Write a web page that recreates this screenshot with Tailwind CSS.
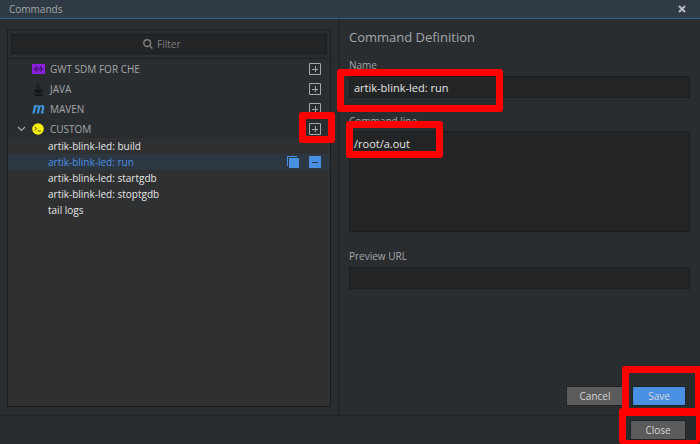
<!DOCTYPE html>
<html lang="en">
<head>
<meta charset="utf-8">
<meta name="viewport" content="width=device-width, initial-scale=1">
<title>Commands</title>
<script src="https://cdn.jsdelivr.net/npm/@tailwindcss/browser@4"></script>
</head>
<body class="flex min-h-screen flex-col overflow-hidden bg-[#292d30] font-['Open_Sans','Noto_Sans',sans-serif] text-[10px] leading-4 text-[#a5a7a8]">
<svg class="hidden" aria-hidden="true">
  <symbol id="plus" viewBox="0 0 12 12"><path d="M.5.5h11v11H.5zM3 6.500h6M6.500 3v6" fill="none" stroke="currentColor"/></symbol>
</svg>

<header class="flex h-[19px] items-center justify-between border-b border-[#2d648f] bg-[#2f3a45] pr-3.5 pl-[9px]">
  <h1>Commands</h1>
  <button type="button" aria-label="Close dialog" class="text-[#b8bcc0]"><svg class="size-2" viewBox="0 0 8 8"><path d="M1 1l6 6M7 1L1 7" stroke="currentColor" stroke-width="2"/></svg></button>
</header>

<main class="flex flex-1">
  <section class="flex w-[340px] shrink-0 border-r-2 border-[#24272a] pt-2.5 pr-[7px] pb-2 pl-[7px]">
    <div class="flex flex-1 flex-col border border-[#1b1c1e]">
      <div class="border-b border-[#1f2123] px-[3px] py-1">
        <label class="flex h-5 items-center justify-center gap-1 border border-[#1b1c1e] bg-[#232425] text-[#7d7f80]">
          <svg class="size-[10px]" viewBox="0 0 10 10"><path d="M7.600 4.200a3.400 3.400 0 1 1-6.800 0a3.400 3.400 0 0 1 6.800 0zM6.800 6.800l2.600 2.600" fill="none" stroke="currentColor" stroke-width="1.400"/></svg>
          <input type="text" aria-label="Filter" placeholder="Filter" class="w-[38px] bg-transparent outline-none placeholder:text-[#7d7f80]">
        </label>
      </div>
      <ul>
        <li class="flex h-5 items-center pr-[9px] pl-6">
          <svg class="mr-[5px] h-[10px] w-[13px]" viewBox="0 0 13 10"><path d="M0 0h13v10H0z" fill="#8a1fe0"/><path d="M5 2.800L2.700 5L5 7.200M8 2.800L10.300 5L8 7.200M6 3.800l1 2.400" fill="none" stroke="#35144f" stroke-width="1.200"/></svg>
          <span class="flex-1">GWT SDM FOR CHE</span>
          <button type="button" aria-label="Add GWT command"><svg class="size-3"><use href="#plus"/></svg></button>
        </li>
        <li class="flex h-5 items-center pr-[9px] pl-6">
          <svg class="mr-[5px] h-[13px] w-[13px]" viewBox="0 0 13 13" fill="none" stroke="#111314"><path d="M6.300.2C7.600 2 3 3.200 5.300 5.800M8.300 2.200C5.500 3.500 6.600 4 6.900 5.600" stroke-width="1"/><path d="M2.600 6.500h6.900l-.5 3.300H3.500z" fill="#111314" stroke="none"/><path d="M9.300 7c2.400-.6 2 1.600-.2 2.100M1.200 10.800c2.500 1.200 7.300 1.300 9.800-.2M3 12.400c2.200.4 5.500.3 7.700-.3" stroke-width=".9"/></svg>
          <span class="flex-1">JAVA</span>
          <button type="button" aria-label="Add Java command"><svg class="size-3"><use href="#plus"/></svg></button>
        </li>
        <li class="flex h-5 items-center pr-[9px] pl-6">
          <svg class="mr-[5px] h-[10px] w-[13px]" viewBox="0 0 13 10"><path d="M.3 9.500L2.200 1H4.500L4.300 1.900C5.300.6 7.300.6 7.800 2C9.200.4 12.700.4 12.300 3.200L11.200 8.200H12L11.700 9.500H8.800L10.100 3.600C10.300 2.400 8.700 2.300 8.200 3.500L6.900 9.500H4.600L5.900 3.600C6.100 2.400 4.500 2.300 4 3.500L2.600 9.500z" fill="#3f93dc"/></svg>
          <span class="flex-1">MAVEN</span>
          <button type="button" aria-label="Add Maven command"><svg class="size-3"><use href="#plus"/></svg></button>
        </li>
        <li class="flex h-[19px] items-center pr-[9px] pl-[9px]">
          <button type="button" aria-label="Collapse custom" class="mr-1.5"><svg class="h-[9px] w-[9px]" viewBox="0 0 9 9"><path d="M1 3l3.500 3.500L8 3" fill="none" stroke="currentColor" stroke-width="1.200"/></svg></button>
          <svg class="mr-1.5 size-3" viewBox="0 0 12 12"><circle cx="6" cy="6" r="5.800" fill="#f7ef0c"/><path d="M2.500 4L4.700 5.500L2.500 7.200M5.600 8h3.200" fill="none" stroke="#555519"/></svg>
          <span class="flex-1">CUSTOM</span>
          <span class="relative flex">
            <button type="button" aria-label="Add custom command"><svg class="size-3"><use href="#plus"/></svg></button>
            <span class="pointer-events-none absolute -top-[11px] -left-[10px] z-10 h-[31px] w-9 rounded-[3px] border-[7px] border-[#fe0000]"></span>
          </span>
        </li>
      </ul>
      <ul class="flex-1 bg-[#2f3031] font-medium text-[#e6e6e6]">
        <li class="pl-10">artik-blink-led: build</li>
        <li class="flex items-center bg-[#2d3742] pr-[9px] pl-10 text-[#4a90e2]">
          <span class="flex-1">artik-blink-led: run</span>
          <button type="button" aria-label="Duplicate" class="mr-2.5"><svg class="size-3" viewBox="0 0 12 12"><path d="M10 .5H.5V10" fill="none" stroke="#4a90e2"/><path d="M2 2h10v10H2z" fill="#4a90e2"/></svg></button>
          <button type="button" aria-label="Remove"><svg class="size-3" viewBox="0 0 12 12"><rect width="12" height="12" rx=".5" fill="#4a90e2"/><path d="M3 6.500h6" stroke="#2d3742"/></svg></button>
        </li>
        <li class="pl-10">artik-blink-led: startgdb</li>
        <li class="pl-10">artik-blink-led: stoptgdb</li>
        <li class="pl-10">tail logs</li>
      </ul>
    </div>
  </section>

  <form class="flex flex-1 flex-col pt-2 pr-[10px] pb-[9px] pl-[9px]">
    <h2 class="mb-2.5 text-[13px] leading-5">Command Definition</h2>
    <label for="name" class="mb-[3px]">Name</label>
    <div class="relative mb-[15px] flex">
      <input id="name" type="text" value="artik-blink-led: run" class="h-[22px] w-full border border-[#1b1c1e] bg-[#232425] px-1 text-[11px] text-[#e6e6e6] outline-none">
      <span class="pointer-events-none absolute -top-[7px] -left-3 z-10 h-[43px] w-[166px] rounded-[3px] border-[7px] border-[#fe0000]"></span>
    </div>
    <label for="line" class="mb-0.5">Command line</label>
    <div class="relative mb-4 flex">
      <textarea id="line" class="h-[101px] w-full resize-none border border-[#1b1c1e] bg-[#232425] px-1 py-1 text-[11px] text-[#e6e6e6] outline-none">/root/a.out</textarea>
      <span class="pointer-events-none absolute -top-[10px] -left-[3px] z-10 h-[37px] w-[97px] rounded-[3px] border-[7px] border-[#fe0000]"></span>
    </div>
    <label for="url" class="mb-[3px]">Preview URL</label>
    <input id="url" type="text" class="h-[22px] w-full border border-[#1b1c1e] bg-[#232425] px-1 text-[11px] text-[#e6e6e6] outline-none">
    <div class="mt-auto flex justify-end gap-2 pr-1 font-medium text-[#d6d6d6]">
      <button type="button" class="h-5 w-[58px] border border-[#1f2225] bg-[#5b5b5b]">Cancel</button>
      <div class="relative">
        <button type="submit" class="h-5 w-[54px] border border-[#1f2225] bg-[#4a90e2]">Save</button>
        <span class="pointer-events-none absolute -top-5 -left-[10px] z-10 h-[50px] w-20 rounded-[3px] border-[7px] border-[#fe0000]"></span>
      </div>
    </div>
  </form>
</main>

<footer class="flex justify-end border-t border-[#222527] pt-1 pr-3.5 pb-1 font-medium text-[#d6d6d6]">
  <div class="relative">
    <button type="button" class="h-5 w-14 border border-[#1f2225] bg-[#5b5b5b]">Close</button>
    <span class="pointer-events-none absolute -top-3 -left-[11px] z-10 h-9 w-[81px] rounded-[3px] border-[7px] border-r-4 border-b-4 border-[#fe0000]"></span>
  </div>
</footer>
</body>
</html>
